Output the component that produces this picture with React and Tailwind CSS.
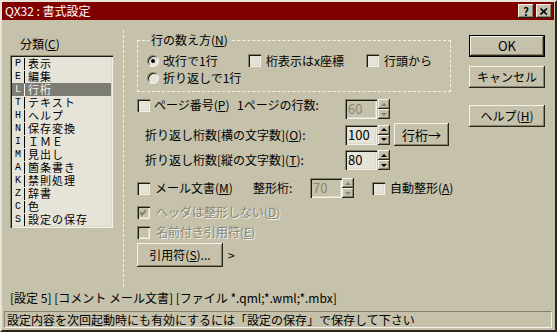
import React from "react";

const face = "bg-[#c5c1aa]";
const raised =
  "shadow-[inset_-1px_-1px_0_#2a281e,inset_1px_1px_0_#f4f2ea,inset_-2px_-2px_0_#86826c]";
const sunken =
  "shadow-[inset_1px_1px_0_#86826c,inset_2px_2px_0_#1a1a14,inset_-1px_-1px_0_#f4f2ea,inset_-2px_-2px_0_#dcd8c6]";
const grayText = "text-[#8a8674] [text-shadow:1px_1px_0_#f4f2ea]";

const items = [
  ["P", "表示"],
  ["E", "編集"],
  ["L", "行桁"],
  ["T", "テキスト"],
  ["H", "ヘルプ"],
  ["N", "保存変換"],
  ["I", "ＩＭＥ"],
  ["M", "見出し"],
  ["A", "箇条書き"],
  ["K", "禁則処理"],
  ["Z", "辞書"],
  ["C", "色"],
  ["S", "設定の保存"],
];

function Check({ checked, disabled }) {
  return (
    <span
      className={`relative inline-block w-[13px] h-[13px] shrink-0 ${sunken} ${
        disabled ? face : "bg-[#e6e4d8]"
      }`}
    >
      {checked && (
        <svg width="13" height="13" viewBox="0 0 13 13" className="absolute inset-0">
          <path
            d="M3 5 L5 7 L9 3 L9 6 L5 10 L3 8 Z"
            fill={disabled ? "#86826c" : "#000"}
          />
        </svg>
      )}
    </span>
  );
}

function Radio({ checked }) {
  return (
    <span className="relative inline-block w-[12px] h-[12px] shrink-0 rounded-full border border-t-[#86826c] border-l-[#86826c] border-b-[#f4f2ea] border-r-[#f4f2ea] bg-[#e6e4d8] shadow-[inset_1px_1px_0_#1a1a14]">
      {checked && (
        <span className="absolute left-[3px] top-[3px] w-[4px] h-[4px] rounded-full bg-black" />
      )}
    </span>
  );
}

function Field({ value, disabled }) {
  return (
    <div
      className={`w-[32px] h-[20px] shrink-0 pl-[3px] leading-[20px] text-[13px] ${sunken} ${
        disabled ? `${face} text-[#8a8674]` : "bg-[#e6e4d8] text-black"
      }`}
    >
      {value}
    </div>
  );
}

function Spin({ disabled }) {
  return (
    <div className="w-[12px] h-[20px] shrink-0 flex flex-col bg-black">
      <div className={`h-[10px] ${face} ${raised} flex items-center justify-center`}>
        <span
          className={`w-0 h-0 border-x-[3px] border-x-transparent border-b-[3px] ${
            disabled ? "border-b-[#86826c]" : "border-b-black"
          }`}
        />
      </div>
      <div className={`h-[10px] ${face} ${raised} flex items-center justify-center`}>
        <span
          className={`w-0 h-0 border-x-[3px] border-x-transparent border-t-[3px] ${
            disabled ? "border-t-[#86826c]" : "border-t-black"
          }`}
        />
      </div>
    </div>
  );
}

function Btn({ className, children }) {
  return (
    <div className={`${face} ${raised} flex items-center justify-center ${className}`}>
      {children}
    </div>
  );
}

function TitleBar() {
  return (
    <div className="h-[18px] mr-px bg-[#800000] flex items-center pl-[3px] pr-[2px]">
      <span className="block text-white text-[12px] leading-[14px]">QX32 : 書式設定</span>
      <div className="ml-auto flex gap-[2px]">
        <Btn className="w-[16px] h-[14px] text-[11px] font-bold leading-none">?</Btn>
        <Btn className="w-[16px] h-[14px]">
          <svg width="8" height="7" viewBox="0 0 8 7">
            <path d="M0.5 0.5 L7 6.5 M7 0.5 L0.5 6.5" stroke="#000" strokeWidth="1.6" />
          </svg>
        </Btn>
      </div>
    </div>
  );
}

function Left() {
  return (
    <div className="w-[121px] shrink-0 flex flex-col">
      <div className="mt-[17px] pl-[18px] h-[14px]">
        分類(<u>C</u>)
      </div>
      <div className={`mt-[4px] ml-[8px] w-[103px] h-[173px] p-[2px] overflow-hidden bg-[#e6e4d8] ${sunken}`}>
        {items.map(([k, t]) => (
          <div
            key={k}
            className={`h-[13px] flex items-center text-[11px] leading-[13px] ${
              k === "L" ? "bg-[#7c7b74] text-[#f4f4f0]" : "text-black"
            }`}
          >
            <span className="block w-[11px] pl-px text-center text-[10px] font-['Liberation_Mono',monospace]">
              {k}
            </span>
            <span className={`block ml-px w-px h-[12px] ${k === "L" ? "bg-[#f4f4f0]" : "bg-black"}`} />
            <span className="block ml-[3px] tracking-[1px]">{t}</span>
          </div>
        ))}
      </div>
    </div>
  );
}

function Middle() {
  return (
    <div className="w-[335px] shrink-0 pl-[13px] flex flex-col">
      <div className="relative mt-[20px] w-[314px] h-[52px] border border-dashed border-[#f4f2ea] pl-[9px] pt-[11px]">
        <span className={`absolute -top-[8px] left-[11px] px-[2px] ${face}`}>
          行の数え方(<u>N</u>)
        </span>
        <div className="flex items-center h-[17px]">
          <div className="flex items-center gap-[4px] w-[101px]">
            <Radio checked />
            改行で1行
          </div>
          <div className="flex items-center gap-[5px] w-[118px]">
            <Check />
            桁表示はx座標
          </div>
          <div className="flex items-center gap-[5px]">
            <Check />
            行頭から
          </div>
        </div>
        <div className="flex items-center h-[17px] gap-[4px]">
          <Radio />
          折り返しで1行
        </div>
      </div>

      <div className="mt-[7px] flex h-[20px]">
        <div className="w-[208px] flex items-center h-[14px] -mt-px">
          <div className="w-[100px] flex items-center gap-[4px]">
            <Check />
            <span className="block">
              ページ番号(<u>P</u>)
            </span>
          </div>
          <span className="block">1ページの行数:</span>
        </div>
        <Field value="60" disabled />
        <div className="ml-px">
          <Spin disabled />
        </div>
      </div>

      <div className="mt-[4px] flex items-center h-[23px]">
        <div className="w-[208px] pl-[8px]">
          折り返し桁数[横の文字数](<u>O</u>):
        </div>
        <Field value="100" />
        <div className="ml-px">
          <Spin />
        </div>
        <Btn className="ml-[4px] w-[55px] h-[23px] text-[13px]">行桁→</Btn>
      </div>

      <div className="mt-[4px] flex items-center h-[20px]">
        <div className="w-[208px] pl-[8px]">
          折り返し桁数[縦の文字数](<u>T</u>):
        </div>
        <Field value="80" />
        <div className="ml-px">
          <Spin />
        </div>
      </div>

      <div className="mt-[8px] flex items-center h-[20px]">
        <div className="w-[116px] flex items-center gap-[5px]">
          <Check />
          <span className="block">
            メール文書(<u>M</u>)
          </span>
        </div>
        <span className="block w-[57px]">整形桁:</span>
        <Field value="70" disabled />
        <Spin disabled />
        <div className="ml-[18px] flex items-center gap-[5px]">
          <Check />
          <span className="block">
            自動整形(<u>A</u>)
          </span>
        </div>
      </div>

      <div className="mt-[7px] flex items-center h-[14px] gap-[6px]">
        <Check checked disabled />
        <span className={`block ${grayText}`}>
          ヘッダは整形しない(<u>D</u>)
        </span>
      </div>

      <div className="mt-[6px] flex items-center h-[14px] gap-[6px]">
        <Check disabled />
        <span className={`block ${grayText}`}>
          名前付き引用符(<u>E</u>)
        </span>
      </div>

      <div className="mt-[4px] flex items-center">
        <Btn className="w-[86px] h-[24px]">
          引用符(<u>S</u>)...
        </Btn>
        <span className="block ml-[5px]">&gt;</span>
      </div>
    </div>
  );
}

function Right() {
  return (
    <div className="pl-[10px] flex flex-col">
      <div className="mt-[15px] w-[76px] h-[22px] border border-black">
        <Btn className="w-full h-full text-[13px]">OK</Btn>
      </div>
      <Btn className="mt-[9px] w-[76px] h-[22px]">キャンセル</Btn>
      <Btn className="mt-[17px] w-[76px] h-[22px]">
        ヘルプ(<u>H</u>)
      </Btn>
    </div>
  );
}

export default function App() {
  return (
    <div
      className={`w-[557px] h-[332px] ${face} border-2 border-t-[#e6e4d8] border-l-[#e6e4d8] border-b-[#2a281e] border-r-[#2a281e] text-[12px] leading-[14px] text-black font-['Noto_Sans_CJK_JP','Noto_Sans',sans-serif] overflow-hidden flex flex-col`}
    >
      <TitleBar />
      <div className="flex h-[268px]">
        <Left />
        <div className="w-px shrink-0 mt-[10px] h-[257px] border-l border-dashed border-[#f4f2ea]" />
        <Middle />
        <Right />
      </div>
      <div className="mt-[2px] h-[16px] pl-[8px] leading-[16px] whitespace-pre">
        [設定 5] [コメント メール文書] [ファイル *.qml;*.wml;*.mbx]
      </div>
      <div className="mt-[5px] ml-[2px] mr-[3px] h-[17px] pl-[2px] leading-[15px] border border-t-[#86826c] border-l-[#86826c] border-b-[#f4f2ea] border-r-[#f4f2ea]">
        設定内容を次回起動時にも有効にするには「設定の保存」で保存して下さい
      </div>
    </div>
  );
}
